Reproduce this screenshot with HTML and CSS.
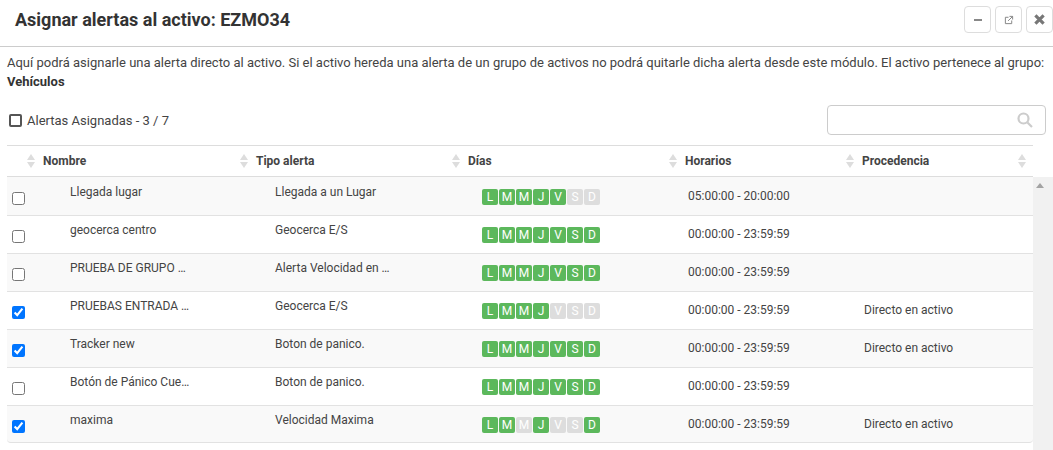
FILE: index.html
```html
<!DOCTYPE html>
<html lang="es">
<head>
<meta charset="UTF-8">
<meta name="viewport" content="width=device-width, initial-scale=1.0">
<title>Asignar alertas</title>
<link rel="stylesheet" href="styles.css">
</head>
<body>

<div class="modal-header">
  <h1 class="modal-title">Asignar alertas al activo: EZMO34</h1>
  <div class="modal-buttons">
    <button class="modal-button">
      <svg width="10" height="10" viewBox="0 0 10 10"><rect x="1" y="4" width="8" height="2" fill="#888"/></svg>
    </button>
    <button class="modal-button">
      <svg width="10" height="10" viewBox="0 0 11 11" fill="none" stroke="#888" stroke-width="1.100"><path d="M5 2.500H1.500V9.500H8.500V6"/><path d="M4.500 6.500L9.500 1.500M6 1.500H9.500V5"/></svg>
    </button>
    <button class="modal-button">
      <svg width="11" height="11" viewBox="0 0 12 12" fill="none" stroke="#777" stroke-width="3.400"><path d="M1.500 1.500L10.500 10.500M10.500 1.500L1.500 10.500"/></svg>
    </button>
  </div>
</div>

<p class="intro">Aquí podrá asignarle una alerta directo al activo. Si el activo hereda una alerta de un grupo de activos no podrá quitarle dicha alerta desde este módulo. El activo pertenece al grupo: <b>Vehículos</b></p>

<div class="toolbar">
  <label class="assigned"><input type="checkbox" class="assigned-check"> Alertas Asignadas - 3 / 7</label>
  <div class="search">
    <svg width="16" height="16" viewBox="0 0 16 16" fill="none" stroke="#ccc" stroke-width="2.200"><circle cx="6.500" cy="6.500" r="5"/><path d="M10.500 10.500L15 15"/></svg>
  </div>
</div>

<div class="table-head">
  <div class="th th-first"><span class="sort"></span>Nombre</div>
  <div class="th"><span class="sort"></span>Tipo alerta</div>
  <div class="th"><span class="sort"></span>Días</div>
  <div class="th"><span class="sort"></span>Horarios</div>
  <div class="th th-last"><span class="th-name"><span class="sort"></span>Procedencia</span><span class="sort sort-end"></span></div>
</div>

<div class="table-wrap">
  <div class="rows">
    <div class="row">
      <div class="cell-check"><input type="checkbox"></div>
      <div class="cell-text">Llegada lugar</div>
      <div class="cell-text">Llegada a un Lugar</div>
      <div class="days"><span class="day">L</span><span class="day">M</span><span class="day">M</span><span class="day">J</span><span class="day">V</span><span class="day off">S</span><span class="day off">D</span></div>
      <div class="cell-hours">05:00:00 - 20:00:00</div>
      <div class="cell-hours"></div>
    </div>
    <div class="row">
      <div class="cell-check"><input type="checkbox"></div>
      <div class="cell-text">geocerca centro</div>
      <div class="cell-text">Geocerca E/S</div>
      <div class="days"><span class="day">L</span><span class="day">M</span><span class="day">M</span><span class="day">J</span><span class="day">V</span><span class="day">S</span><span class="day">D</span></div>
      <div class="cell-hours">00:00:00 - 23:59:59</div>
      <div class="cell-hours"></div>
    </div>
    <div class="row">
      <div class="cell-check"><input type="checkbox"></div>
      <div class="cell-text">PRUEBA DE GRUPO …</div>
      <div class="cell-text">Alerta Velocidad en …</div>
      <div class="days"><span class="day">L</span><span class="day">M</span><span class="day">M</span><span class="day">J</span><span class="day">V</span><span class="day">S</span><span class="day">D</span></div>
      <div class="cell-hours">00:00:00 - 23:59:59</div>
      <div class="cell-hours"></div>
    </div>
    <div class="row">
      <div class="cell-check"><input type="checkbox" checked></div>
      <div class="cell-text">PRUEBAS ENTRADA …</div>
      <div class="cell-text">Geocerca E/S</div>
      <div class="days"><span class="day">L</span><span class="day">M</span><span class="day">M</span><span class="day">J</span><span class="day off">V</span><span class="day off">S</span><span class="day off">D</span></div>
      <div class="cell-hours">00:00:00 - 23:59:59</div>
      <div class="cell-hours">Directo en activo</div>
    </div>
    <div class="row">
      <div class="cell-check"><input type="checkbox" checked></div>
      <div class="cell-text">Tracker new</div>
      <div class="cell-text">Boton de panico.</div>
      <div class="days"><span class="day">L</span><span class="day">M</span><span class="day">M</span><span class="day">J</span><span class="day">V</span><span class="day">S</span><span class="day">D</span></div>
      <div class="cell-hours">00:00:00 - 23:59:59</div>
      <div class="cell-hours">Directo en activo</div>
    </div>
    <div class="row">
      <div class="cell-check"><input type="checkbox"></div>
      <div class="cell-text">Botón de Pánico Cue…</div>
      <div class="cell-text">Boton de panico.</div>
      <div class="days"><span class="day">L</span><span class="day">M</span><span class="day">M</span><span class="day">J</span><span class="day">V</span><span class="day">S</span><span class="day">D</span></div>
      <div class="cell-hours">00:00:00 - 23:59:59</div>
      <div class="cell-hours"></div>
    </div>
    <div class="row">
      <div class="cell-check"><input type="checkbox" checked></div>
      <div class="cell-text">maxima</div>
      <div class="cell-text">Velocidad Maxima</div>
      <div class="days"><span class="day">L</span><span class="day">M</span><span class="day off">M</span><span class="day">J</span><span class="day off">V</span><span class="day off">S</span><span class="day">D</span></div>
      <div class="cell-hours">00:00:00 - 23:59:59</div>
      <div class="cell-hours">Directo en activo</div>
    </div>
  </div>
  <div class="scrollbar"><span class="scroll-up"></span></div>
</div>

</body>
</html>
```

FILE: styles.css
```css
body {
  font-family: Roboto, Arial, sans-serif;
  font-size: 12px;
  color: #444;
  background-color: #fff;
  margin: 0;
  padding: 0;
  overflow: hidden;
}

.modal-header {
  display: flex;
  justify-content: space-between;
  align-items: flex-start;
  height: 47px;
  padding: 6px 0 0 15px;
  box-sizing: border-box;
  border-bottom: 1px solid #ccc;
}

.modal-title {
  margin: 3px 0 0;
  font-size: 18px;
  font-weight: 700;
  color: #333;
}

.modal-buttons {
  display: flex;
  gap: 4px;
}

.modal-button {
  display: flex;
  align-items: center;
  justify-content: center;
  width: 27px;
  height: 27px;
  padding: 0;
  background: #fff;
  border: 1px solid #ddd;
  border-radius: 4px;
}

.intro {
  margin: 0;
  padding: 6px 7px 0;
  font-size: 13px;
  line-height: 19px;
}

.intro b {
  font-weight: 700;
  color: #333;
}

.toolbar {
  display: flex;
  justify-content: space-between;
  align-items: center;
  height: 30px;
  margin-top: 14px;
  padding: 0 7px 0 9px;
}

.assigned {
  display: flex;
  align-items: center;
  gap: 5px;
  font-size: 13px;
}

.assigned-check {
  appearance: none;
  width: 13px;
  height: 13px;
  margin: 0;
  border: 2px solid #555;
  border-radius: 2px;
  background: #fff;
}

.search {
  display: flex;
  justify-content: flex-end;
  align-items: center;
  width: 219px;
  height: 30px;
  box-sizing: border-box;
  padding-right: 12px;
  border: 1px solid #ccc;
  border-radius: 4px;
}

.table-head {
  display: grid;
  grid-template-columns: 227px 212px 217px 177px 193px;
  height: 32px;
  box-sizing: border-box;
  margin: 10px 20px 0 7px;
  border-top: 1px solid #ddd;
  border-bottom: 1px solid #ddd;
}

.th {
  display: flex;
  align-items: center;
  padding-left: 6px;
  font-weight: 700;
  color: #444;
}

.th-first {
  padding-left: 20px;
}

.th-last {
  justify-content: space-between;
  padding-right: 6px;
}

.th-name {
  display: flex;
  align-items: center;
}

.sort {
  display: flex;
  flex-direction: column;
  gap: 2px;
  margin-right: 7px;
  width: 9px;
}

.sort-end {
  margin-right: 0;
}

.sort::before,
.sort::after {
  content: "";
  width: 0;
  height: 0;
  border-left: 4.500px solid transparent;
  border-right: 4.500px solid transparent;
}

.sort::before {
  border-bottom: 6px solid #ddd;
}

.sort::after {
  border-top: 6px solid #ddd;
}

.table-wrap {
  display: flex;
  padding-left: 7px;
}

.rows {
  width: 1026px;
}

.row {
  display: grid;
  grid-template-columns: 63px 205px 207px 206px 176px 1fr;
  height: 38px;
  box-sizing: border-box;
  border-top: 1px solid #e2e2e2;
}

.row:nth-child(odd) {
  background-color: #f9f9f9;
}

.row:first-child {
  border-top-color: transparent;
}

.row:last-child {
  border-bottom: 1px solid #e2e2e2;
  border-radius: 0 0 4px 4px;
}

.cell-check {
  padding: 14px 0 0 5px;
}

.cell-check input {
  display: block;
  width: 13px;
  height: 13px;
  margin: 0;
}

.cell-text {
  padding-top: 7px;
  line-height: 15px;
}

.cell-hours {
  padding-top: 11px;
  line-height: 15px;
}

.days {
  display: flex;
  gap: 1px;
  padding-top: 11px;
}

.day {
  display: flex;
  align-items: center;
  justify-content: center;
  width: 16px;
  height: 16px;
  background-color: #5cb85c;
  border-radius: 2px;
  color: #fff;
  font-size: 12px;
}

.day.off {
  background-color: #ddd;
}

.scrollbar {
  flex: 1;
  background-color: #f1f1f1;
  height: 273px;
}

.scroll-up {
  display: block;
  width: 0;
  height: 0;
  margin: 6px 0 0 3px;
  border-left: 4px solid transparent;
  border-right: 4px solid transparent;
  border-bottom: 5px solid #a3a3a3;
}
```
